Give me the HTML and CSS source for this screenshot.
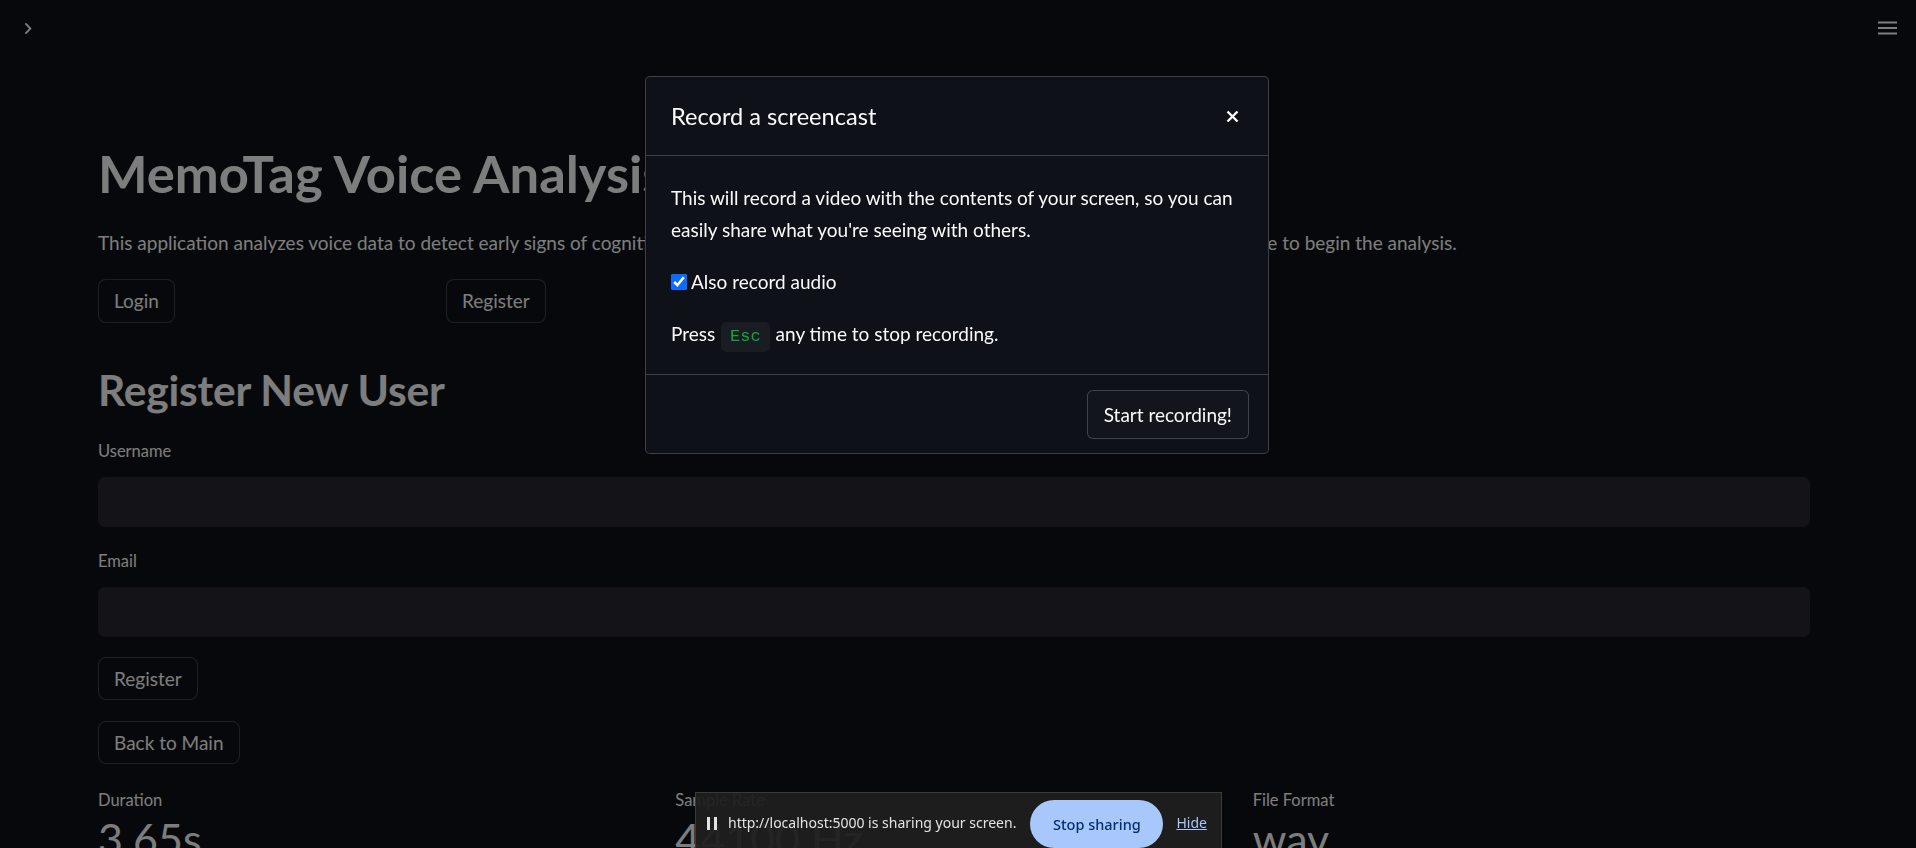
FILE: index.html
```html
<!DOCTYPE html>
<html lang="en">
<head>
<meta charset="utf-8">
<title>MemoTag Voice Analysis</title>
<link rel="stylesheet" href="styles.css">
</head>
<body>
<div class="app">
  <header class="toolbar">
    <button class="icon-btn chevron" aria-label="Open sidebar">
      <svg width="8" height="13" viewBox="0 0 8 13"><path d="M1.4 1.3 L6.4 6.5 L1.4 11.7" fill="none" stroke="currentColor" stroke-width="1.9"/></svg>
    </button>
    <button class="icon-btn burger" aria-label="Main menu">
      <svg width="19" height="14" viewBox="0 0 19 14"><rect x="0" y="0.5" width="19" height="2" fill="currentColor"/><rect x="0" y="6" width="19" height="2" fill="currentColor"/><rect x="0" y="11.5" width="19" height="2" fill="currentColor"/></svg>
    </button>
  </header>

  <main class="main">
    <h1 class="title">MemoTag Voice Analysis</h1>
    <p class="desc">This application analyzes voice data to detect early signs of cognitive decline. Please login or register, then upload an audio file or use a sample to begin the analysis.</p>

    <div class="btn-row">
      <div class="col"><button class="st-btn">Login</button></div>
      <div class="col"><button class="st-btn">Register</button></div>
    </div>

    <h2 class="subtitle">Register New User</h2>

    <div class="field">
      <label class="field-label">Username</label>
      <div class="text-input"></div>
    </div>
    <div class="field">
      <label class="field-label">Email</label>
      <div class="text-input"></div>
    </div>

    <div class="stack-btn"><button class="st-btn">Register</button></div>
    <div class="stack-btn"><button class="st-btn">Back to Main</button></div>

    <div class="metrics">
      <div class="metric"><div class="metric-label">Duration</div><div class="metric-value">3.65s</div></div>
      <div class="metric"><div class="metric-label">Sample Rate</div><div class="metric-value">44100 Hz</div></div>
      <div class="metric"><div class="metric-label">File Format</div><div class="metric-value">wav</div></div>
    </div>
  </main>
</div>

<div class="backdrop"></div>

<div class="modal" role="dialog">
  <div class="modal-head">
    <span class="modal-title">Record a screencast</span>
    <button class="close" aria-label="Close">
      <svg width="13" height="13" viewBox="0 0 13 13"><path d="M1.5 1.5 L11.5 11.5 M11.5 1.5 L1.5 11.5" stroke="currentColor" stroke-width="2.4" fill="none"/></svg>
    </button>
  </div>
  <div class="modal-body">
    <p class="modal-text">This will record a video with the contents of your screen, so you can easily share what you're seeing with others.</p>
    <label class="check-row"><input type="checkbox" checked class="check"> Also record audio</label>
    <p class="press">Press <code class="kbd">Esc</code> any time to stop recording.</p>
  </div>
  <div class="modal-foot">
    <button class="start-btn">Start recording!</button>
  </div>
</div>

<div class="share-bar">
  <span class="pause"><span></span><span></span></span>
  <span class="share-text">http://localhost:5000 is sharing your screen.</span>
  <button class="stop-btn">Stop sharing</button>
  <a class="hide-link" href="#">Hide</a>
</div>
</body>
</html>
```

FILE: styles.css
```css
* { box-sizing: border-box; }

html, body {
  margin: 0;
  padding: 0;
  height: 100%;
  overflow: hidden;
}

body {
  background: #0e1117;
  color: #fafafa;
  font-family: "Lato", "Noto Sans", sans-serif;
}

button {
  font-family: inherit;
  cursor: pointer;
}

.toolbar {
  height: 56px;
  display: flex;
  justify-content: space-between;
  align-items: flex-start;
  padding: 21px 19px 0 24px;
}

.icon-btn {
  background: none;
  border: 0;
  padding: 0;
  color: #fafafa;
  display: block;
  line-height: 0;
}

.chevron { margin-top: 1px; }

.main {
  padding: 84px 106px 0 98px;
}

.title {
  margin: 0;
  font-size: 52.5px;
  line-height: 66px;
  font-weight: 700;
  letter-spacing: 0;
}

.desc {
  margin: 21px 0 0;
  font-size: 19px;
  line-height: 32px;
  white-space: nowrap;
}

.btn-row {
  margin-top: 20px;
  display: grid;
  grid-template-columns: 328px 1fr;
  gap: 20px;
}

.st-btn {
  height: 44px;
  padding: 0 15px;
  background: #0e1117;
  color: #fafafa;
  border: 1px solid rgba(250, 250, 250, 0.2);
  border-radius: 8px;
  font-size: 19px;
  line-height: 42px;
}

.subtitle {
  margin: 40px 0 0;
  font-size: 42.5px;
  line-height: 54px;
  font-weight: 700;
  letter-spacing: -0.2px;
}

.field { margin-top: 22px; }

.field-label {
  display: block;
  font-size: 16.5px;
  line-height: 24px;
}

.text-input {
  margin-top: 14px;
  height: 50px;
  background: #262730;
  border-radius: 7px;
}

.stack-btn { margin-top: 20px; }
.stack-btn + .stack-btn { margin-top: 21px; }
.stack-btn .st-btn { height: 43px; line-height: 41px; }

.metrics {
  margin-top: 24px;
  display: grid;
  grid-template-columns: repeat(3, 1fr);
  gap: 20px;
}

.metric-label {
  font-size: 16.5px;
  line-height: 24px;
}

.metric-value {
  font-size: 43px;
  line-height: 54px;
  font-weight: 400;
}

/* dim layer behind the dialog */
.backdrop {
  position: fixed;
  inset: 0;
  background: rgba(0, 0, 0, 0.5);
}

.modal {
  position: fixed;
  left: 645px;
  top: 76px;
  width: 624px;
  height: 378px;
  background: #0e1117;
  border: 1px solid rgba(250, 250, 250, 0.2);
  border-radius: 5px;
  display: flex;
  flex-direction: column;
}

.modal-head {
  height: 79px;
  flex: none;
  display: flex;
  align-items: center;
  justify-content: space-between;
  padding: 0 29px 0 25px;
  border-bottom: 1px solid rgba(250, 250, 250, 0.2);
}

.modal-title {
  font-size: 23.6px;
  line-height: 32px;
  margin-top: -1px;
}

.close {
  background: none;
  border: 0;
  padding: 0;
  color: #fafafa;
  line-height: 0;
}

.modal-body {
  height: 219px;
  flex: none;
  padding: 26px 25px 0;
  border-bottom: 1px solid rgba(250, 250, 250, 0.2);
}

.modal-text {
  margin: 0;
  font-size: 19px;
  line-height: 32px;
}

.check-row {
  margin-top: 20px;
  display: flex;
  align-items: center;
  font-size: 19px;
  line-height: 32px;
}

.check {
  width: 16px;
  height: 16px;
  margin: 0 4px 0 0;
  accent-color: #0b6cff;
}

.press {
  margin: 20px 0 0;
  font-size: 19px;
  line-height: 32px;
}

.kbd {
  display: inline-block;
  font-family: "Liberation Mono", "DejaVu Sans Mono", monospace;
  font-size: 17px;
  line-height: 30px;
  padding: 0 9px;
  margin: 0 1px;
  color: #09ab3b;
  background: #1a1c23;
  border-radius: 5px;
  vertical-align: 0;
}

.modal-foot {
  flex: 1;
  display: flex;
  justify-content: flex-end;
  align-items: flex-start;
  padding: 15px 19px 0 0;
}

.start-btn {
  height: 49px;
  padding: 0 16px;
  background: #12151c;
  color: #fafafa;
  border: 1px solid rgba(250, 250, 250, 0.2);
  border-radius: 6px;
  font-size: 19px;
}

/* browser screen-sharing infobar */
.share-bar {
  position: fixed;
  left: 695px;
  top: 792px;
  width: 527px;
  height: 64px;
  background: rgba(31, 31, 31, 0.94);
  border: 1px solid #3a3a3a;
  display: flex;
  align-items: flex-start;
  padding: 7px 0 0 11px;
  font-family: "Noto Sans", "Open Sans", sans-serif;
}

.pause {
  display: flex;
  gap: 4px;
  margin-top: 17px;
}

.pause span {
  width: 3px;
  height: 13px;
  background: #e3e3e3;
}

.share-text {
  margin-left: 11px;
  margin-top: 13px;
  font-size: 14px;
  line-height: 20px;
  color: #e3e3e3;
}

.stop-btn {
  margin-left: 14px;
  width: 133px;
  height: 48px;
  border: 0;
  border-radius: 24px;
  background: #a8c7fa;
  color: #062e6f;
  font-family: "Noto Sans", "Open Sans", sans-serif;
  font-size: 14.5px;
  font-weight: 500;
}

.hide-link {
  margin-left: 13px;
  margin-top: 13px;
  font-size: 14px;
  line-height: 20px;
  color: #a8c7fa;
  text-decoration: underline;
}
```
